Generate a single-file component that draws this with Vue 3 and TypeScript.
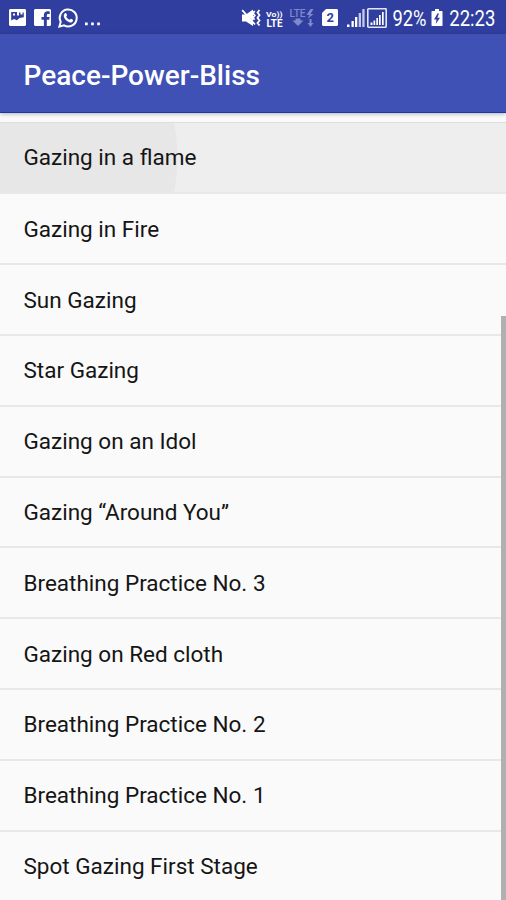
<script setup lang="ts">
interface Practice {
  title: string
  pressed?: boolean
}

const practices: Practice[] = [
  { title: 'Gazing in a flame', pressed: true },
  { title: 'Gazing in Fire' },
  { title: 'Sun Gazing' },
  { title: 'Star Gazing' },
  { title: 'Gazing on an Idol' },
  { title: 'Gazing “Around You”' },
  { title: 'Breathing Practice No. 3' },
  { title: 'Gazing on Red cloth' },
  { title: 'Breathing Practice No. 2' },
  { title: 'Breathing Practice No. 1' },
  { title: 'Spot Gazing First Stage' },
]
</script>

<template>
  <div class="screen">
    <header class="status">
      <div class="group notifications">
        <svg width="17" height="17" viewBox="0 0 17 17">
          <path fill="#fff" fill-rule="evenodd" d="M1 0h15l1 1v15l-1 1H1l-1-1V1zM2.2 3v8.500L5 10l3 1.200L10.500 9l4.300-.8V3.500h-1.300v2h-2v-2H10v3H8V3z" />
          <path fill="#fff" d="M4 4.500h2v2H4z" />
        </svg>
        <svg width="17" height="17" viewBox="0 0 17 17">
          <path fill="#fff" d="M1 0h15l1 1v15l-1 1h-3.200v-6.200h2.400l.4-2.800h-2.800V6.300c0-.9.4-1.400 1.500-1.400h1.400V2.400c-.5-.1-1.100-.1-2-.1-2.400 0-3.800 1.300-3.800 3.800V8H7.500v2.800h2.400V17H1l-1-1V1z" />
        </svg>
        <svg width="20" height="20" viewBox="0 0 20 20">
          <path fill="none" stroke="#fff" stroke-width="2" d="M1.4 18.6l1.3-4.7A8.5 8.5 0 1 1 6 17.3z" />
          <path fill="#fff" d="M6.9 5.2c.6-.5 1.2-.3 1.4.2l.7 1.7c.2.6-.8 1.3-.7 1.6.7 1.4 1.8 2.4 3.2 3 .4.1 1-1.1 1.5-.9l1.8.9c.6.4.1 1.7-.6 2.2-3.2 2.2-9.5-3.4-8.3-7.1.2-.7.5-1.1 1-1.6z" />
        </svg>
        <svg width="16" height="17" viewBox="0 0 16 17">
          <path fill="#fff" d="M0 13.500h2.700v2.700H0zm6.100 0h2.700v2.700H6.100zm6.100 0h2.700v2.700h-2.700z" />
        </svg>
      </div>
      <div class="group indicators">
        <svg class="mute" width="20" height="18" viewBox="0 0 20 18">
          <path fill="#fff" d="M1 5.500h4l7-5v16.500l-7-4.500H1z" />
          <path fill="none" stroke="#303f9f" stroke-width="0.800" d="M2.500 2.200l10 11" />
          <path fill="none" stroke="#fff" stroke-width="1.800" d="M1.200 1.200L14 15.500M13.800 2l-2 2.200 2 2.300-1.800 2.300 1.500 2M18.500 1l-2 2.500 2 2.500-2 3 2 2.500-2 2.500 2 2.500" />
        </svg>
        <svg class="volte" width="17" height="20" viewBox="0 0 17 20">
          <text x="0" y="8.500" textLength="16.500" lengthAdjust="spacingAndGlyphs">Vo))</text>
          <text class="lte" x="0.500" y="18.700" textLength="16" lengthAdjust="spacingAndGlyphs">LTE</text>
        </svg>
        <svg class="data" width="26" height="18" viewBox="0 0 26 18">
          <text x="0.500" y="8" textLength="16" lengthAdjust="spacingAndGlyphs">LTE</text>
          <path d="M6.500 9.500h5v2h3L9 17l-5.500-5.500h3zM21.500 0l-4 6h3l-2 4 6-5h-3l3-5zM20.500 10h2v4h2l-3 4-3-4h2z" />
        </svg>
        <svg class="sim" width="16" height="17" viewBox="0 0 16 17">
          <path fill="#fff" d="M4 0h11l1 1v15l-1 1H1l-1-1V4z" />
          <text x="4.400" y="13">2</text>
        </svg>
        <svg class="signal" width="18" height="18" viewBox="0 0 18 18">
          <path fill="#fff" d="M0 15.500h2.500V18H0zM4.500 12h2.300v6H4.500zM8 8h2.300v10H8z" />
          <path fill="#c4c9e9" d="M11.700 4H14v14h-2.300zM15.300 0h2.300v18h-2.300z" />
        </svg>
        <svg class="signal-box" width="20" height="20" viewBox="0 0 20 20">
          <rect x="0.800" y="0.800" width="18.400" height="18.400" rx="0.600" fill="none" stroke="#e3e6f7" stroke-width="1.600" />
          <path fill="#fff" d="M3.500 14.500h2V17h-2zM6.500 12.500h1.700V17H6.500zM9.300 10H11v7H9.300zM12 7h1.700v10H12zM15 4h1.700v13H15z" />
        </svg>
        <svg class="percent" width="35" height="26" viewBox="0 0 35 26">
          <text x="0.500" y="21" textLength="34" lengthAdjust="spacingAndGlyphs">92%</text>
        </svg>
        <svg class="battery" width="12" height="18" viewBox="0 0 12 18">
          <path fill="#fff" d="M4 0h4v2h3l.5.5v14l-.5.500H1l-.5-.500v-14L1 2h3z" />
          <path fill="#303f9f" d="M6.500 4.500L3 10.500h2.500L4.800 15 9 8.800H6.400L8 4.500z" />
        </svg>
        <svg class="clock" width="47" height="26" viewBox="0 0 47 26">
          <text x="0.300" y="21" textLength="46" lengthAdjust="spacingAndGlyphs">22:23</text>
        </svg>
      </div>
    </header>
    <div class="toolbar"><h1>Peace-Power-Bliss</h1></div>
    <main class="content">
      <ul class="list">
        <li v-for="item in practices" :key="item.title" class="row" :class="{ pressed: item.pressed }">
          {{ item.title }}
        </li>
      </ul>
      <div class="scrollbar"></div>
    </main>
  </div>
</template>

<style>
body {
  margin: 0;
  background: #fafafa;
}
</style>

<style scoped>
.screen {
  display: flex;
  flex-direction: column;
  width: 506px;
  height: 900px;
  overflow: hidden;
  background: #fafafa;
  font-family: Roboto, "Liberation Sans", sans-serif;
}
.status {
  display: flex;
  justify-content: space-between;
  flex: none;
  box-sizing: border-box;
  height: 34px;
  padding: 1px 10px 0 9px;
  background: #303f9f;
}
.group {
  display: flex;
  align-items: center;
}
.group svg {
  display: block;
  flex: none;
  overflow: visible;
}
.notifications {
  gap: 7px;
}
.notifications svg:first-child {
  margin-right: 1px;
}
.mute { margin-right: 5px; }
.volte { margin-right: 6px; }
.data { margin-right: 7px; }
.sim { margin-right: 9px; }
.signal { margin-right: 2px; }
.signal-box { margin-right: 5px; }
.percent { margin-right: 4px; }
.battery { margin-right: 6px; }
.volte text {
  fill: #fff;
  font-size: 8px;
  font-weight: 700;
}
.volte .lte {
  font-size: 10.500px;
}
.data {
  fill: #7f89cb;
}
.data text {
  font-size: 10px;
  font-weight: 500;
}
.sim text {
  fill: #303f9f;
  font-size: 13px;
  font-weight: 700;
}
.percent text,
.clock text {
  fill: #fff;
  font-size: 22px;
}
.toolbar {
  z-index: 1;
  display: flex;
  align-items: center;
  flex: none;
  box-sizing: border-box;
  height: 79px;
  padding: 6px 23.500px 0;
  background: #3f51b5;
  border-bottom: 1px solid #1c37a8;
  box-shadow: 0 1px 4px rgba(0, 0, 0, 0.28);
}
h1 {
  margin: 0;
  color: #fff;
  font-size: 28px;
  font-weight: 500;
  line-height: 32px;
}
.content {
  position: relative;
  flex: 1;
  min-height: 0;
  padding-top: 8.600px;
}
.list {
  display: grid;
  grid-auto-rows: 70.800px;
  margin: 0;
  padding: 0;
  list-style: none;
}
.row {
  display: flex;
  align-items: center;
  box-sizing: border-box;
  padding: 0 23.500px;
  border-top: 2px solid #e8e8e8;
  color: #151515;
  font-size: 22.500px;
}
.row.pressed {
  border-top: 1px solid #dedede;
  background: radial-gradient(circle 178px at 0 50%, #e7e7e7 177px, #eee 178px);
}
.scrollbar {
  position: absolute;
  top: 203px;
  right: 0;
  bottom: 0;
  width: 5px;
  background: #b0b0b0;
}
</style>
